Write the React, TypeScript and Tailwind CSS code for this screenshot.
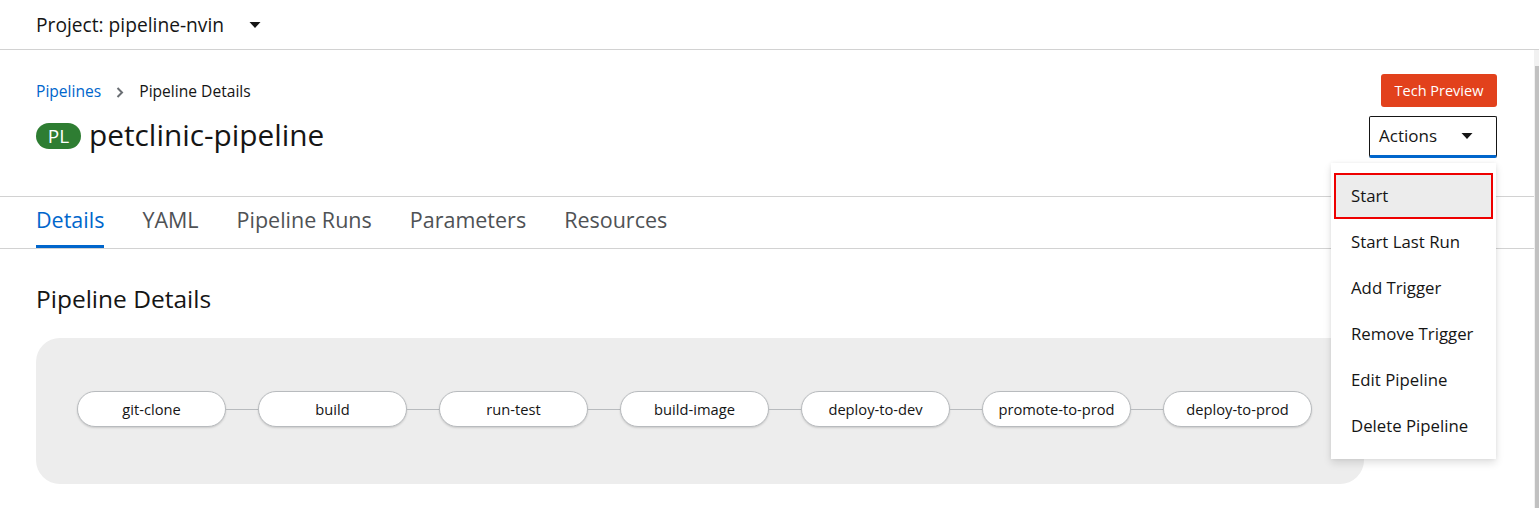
import React from "react";

const nodes = [
  "git-clone",
  "build",
  "run-test",
  "build-image",
  "deploy-to-dev",
  "promote-to-prod",
  "deploy-to-prod",
];

const menu = [
  "Start",
  "Start Last Run",
  "Add Trigger",
  "Remove Trigger",
  "Edit Pipeline",
  "Delete Pipeline",
];

const tabs = ["Details", "YAML", "Pipeline Runs", "Parameters", "Resources"];

function Caret() {
  return (
    <svg width="12" height="8" viewBox="0 0 12 8" className="block">
      <path d="M0.5 1 L11.5 1 L6 7 Z" fill="#151515" />
    </svg>
  );
}

export default function App() {
  return (
    <div
      className="w-[1539px] h-[508px] overflow-hidden bg-white text-[#151515] flex flex-col"
      style={{ fontFamily: '"Open Sans", "Liberation Sans", sans-serif' }}
    >
      {/* top project bar */}
      <div className="h-[50px] shrink-0 border-b border-[#d2d2d2] flex items-center pl-[36px]">
        <span className="text-[19.2px] leading-none">Project: pipeline-nvin</span>
        <span className="ml-[25px]">
          <Caret />
        </span>
      </div>

      <div className="flex flex-1 min-h-0">
        <div className="relative flex-1 min-w-0 flex flex-col">
          {/* page heading */}
          <div className="h-[147px] shrink-0 border-b border-[#d2d2d2] flex justify-between pl-[36px] pr-[37px] pt-[24px]">
            <div className="flex flex-col">
              <div className="mt-[8px] h-[20px] flex items-center text-[15.6px]">
                <span className="text-[#0066cc]">Pipelines</span>
                <svg width="8" height="11" viewBox="0 0 8 11" className="ml-[15px] mr-[15px]">
                  <path d="M1.5 1 L6 5.5 L1.5 10" stroke="#6a6e73" strokeWidth="2" fill="none" />
                </svg>
                <span className="text-[#151515]">Pipeline Details</span>
              </div>
              <div className="mt-[16px] h-[36px] flex items-center">
                <span className="h-[26px] w-[45px] rounded-[13px] bg-[#2e7d32] text-white text-[19px] flex items-center justify-center leading-none">
                  PL
                </span>
                <span className="ml-[8px] text-[29.8px] leading-none -mt-[2px]">petclinic-pipeline</span>
              </div>
            </div>
            <div className="flex flex-col items-end">
              <div className="h-[33px] w-[116px] rounded-[3px] bg-[#e2411c] text-white text-[14.5px] flex items-center justify-center">
                Tech Preview
              </div>
              <div className="mt-[9px] h-[42px] w-[128px] rounded-[2px] border border-[#151515] border-b-[3px] border-b-[#0066cc] flex items-center justify-between pl-[9px] pr-[23px]">
                <span className="text-[17px]">Actions</span>
                <Caret />
              </div>
            </div>
          </div>

          {/* tabs */}
          <div className="h-[52px] shrink-0 border-b border-[#d2d2d2] flex items-stretch gap-[38px] pl-[36px]">
            {tabs.map((t, i) => (
              <div key={t} className="relative flex items-center">
                <span className={`text-[21.5px] -mt-[5px] ${i === 0 ? "text-[#0066cc]" : "text-[#4f5255]"}`}>{t}</span>
                {i === 0 && <div className="absolute left-0 right-0 bottom-0 h-[3px] bg-[#0066cc]" />}
              </div>
            ))}
          </div>

          {/* details */}
          <div className="pl-[36px] pt-[36px]">
            <h2 className="text-[24.5px] leading-[28px]">Pipeline Details</h2>
            <div className="mt-[25px] w-[1328px] h-[146px] rounded-[24px] bg-[#ededed] flex items-center pl-[41px] pb-[4px]">
              {nodes.map((n, i) => (
                <React.Fragment key={n}>
                  {i > 0 && <div className="w-[32px] h-px bg-[#b8bbbe]" />}
                  <div className="w-[149px] h-[36px] rounded-[18px] bg-white border border-[#b8bbbe] shadow-[0_1px_2px_rgba(0,0,0,0.15)] flex items-center justify-center text-[14.7px] text-[#151515]">
                    {n}
                  </div>
                </React.Fragment>
              ))}
            </div>
          </div>

          {/* dropdown menu */}
          <div className="absolute left-[1331px] top-[113px] w-[165px] bg-white py-[10px] shadow-[0_4px_8px_0_rgba(3,3,3,0.12),0_0_4px_0_rgba(3,3,3,0.06)]">
            {menu.map((m, i) => (
              <div
                key={m}
                className={`h-[46px] flex items-center text-[16.8px] ${
                  i === 0
                    ? "bg-[#ececec] border-2 border-[#ee0000] mx-[3px] pl-[15px]"
                    : "pl-[20px]"
                }`}
              >
                {m}
              </div>
            ))}
          </div>
        </div>

        {/* scrollbar */}
        <div className="w-[5px] shrink-0 bg-[#f1f1f1] flex flex-col">
          <div className="h-[16px]" />
          <div className="flex-1 ml-[1px] bg-[#c1c1c1]" />
        </div>
      </div>
    </div>
  );
}
